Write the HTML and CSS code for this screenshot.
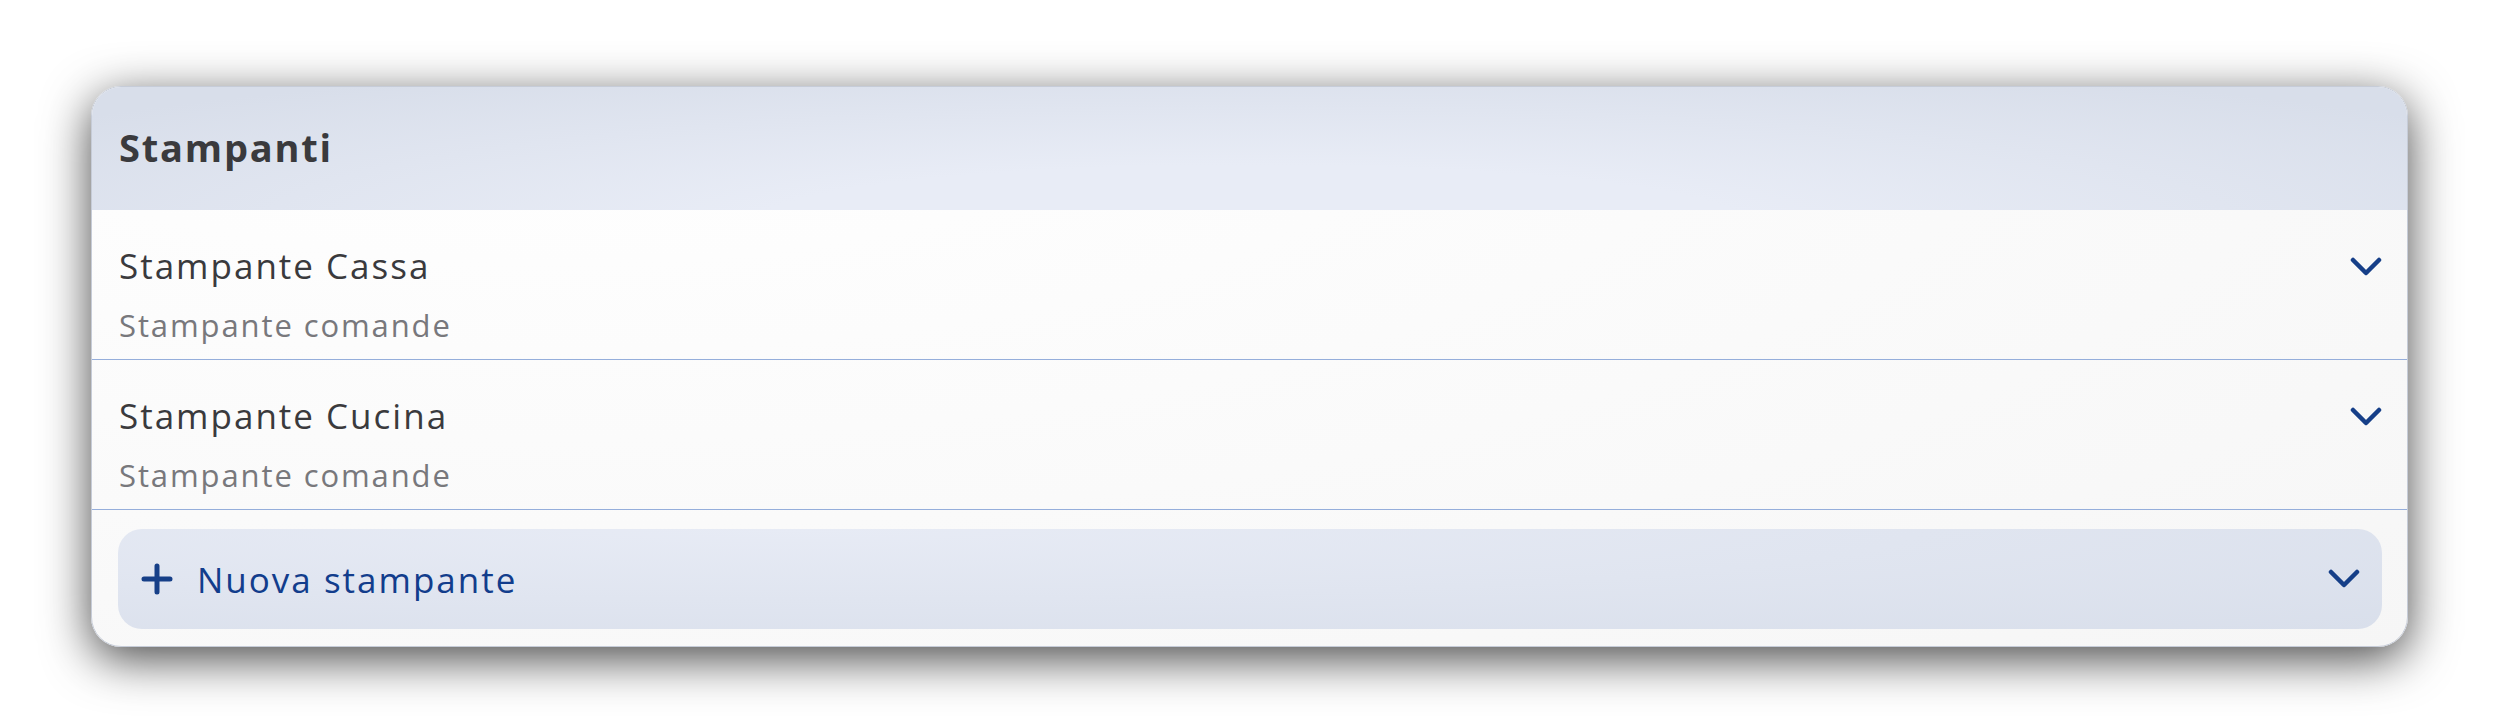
FILE: index.html
```html
<!DOCTYPE html>
<html lang="it">
<head>
  <meta charset="UTF-8" />
  <meta name="viewport" content="width=device-width, initial-scale=1.0"/>
  <title>Stampanti</title>
  <link rel="stylesheet" href="styles.css">
</head>
<body>

  <div class="card">
    <div class="card-header">Stampanti</div>

    <div class="printer">
      <div class="printer-text">
        <div class="printer-name">Stampante Cassa</div>
        <div class="printer-type">Stampante comande</div>
      </div>
      <svg class="chevron" viewBox="0 0 32 20"><polyline points="3,3 16,16 29,3"/></svg>
    </div>

    <div class="printer">
      <div class="printer-text">
        <div class="printer-name">Stampante Cucina</div>
        <div class="printer-type">Stampante comande</div>
      </div>
      <svg class="chevron" viewBox="0 0 32 20"><polyline points="3,3 16,16 29,3"/></svg>
    </div>

    <div class="add-area">
      <div class="add-button">
        <svg class="plus" viewBox="0 0 32 32"><path d="M16 3 V29 M3 16 H29"/></svg>
        <span class="add-label">Nuova stampante</span>
        <svg class="chevron" viewBox="0 0 32 20"><polyline points="3,3 16,16 29,3"/></svg>
      </div>
    </div>
  </div>

</body>
</html>
```

FILE: styles.css
```css
html {
  background: #fff;
}

body {
  margin: 0;
  padding: 86px 100px 0 91px;
  min-height: 726px;
  box-sizing: border-box;
  background: #fff;
  font-family: "Open Sans", Arial, sans-serif;
}

.card {
  border-radius: 30px;
  overflow: hidden;
  background: radial-gradient(ellipse at 20% 0%, #ffffff, #f6f6f6);
  border: 1px solid #c6ccd8;
  box-shadow: 0 12px 48px rgba(0, 0, 0, 0.72);
  height: 559px;
}

.card-header {
  height: 119px;
  display: flex;
  align-items: center;
  padding: 0 0 4px 27px;
  background: radial-gradient(ellipse at 50% 110%, #e8ecf6 30%, #d8deea 90%);
  color: #3a3a3d;
  font-size: 38px;
  font-weight: bold;
  letter-spacing: 1.8px;
}

.printer {
  height: 149px;
  display: flex;
  align-items: flex-start;
  justify-content: space-between;
  padding: 0 25px 0 27px;
  border-bottom: 1px solid #95aedb;
}

.printer-text {
  padding-top: 32px;
}

.printer-name {
  font-size: 35px;
  line-height: 48px;
  color: #3a3a3d;
  letter-spacing: 2px;
}

.printer-type {
  margin-top: 14px;
  font-size: 31px;
  line-height: 42px;
  color: #78787c;
  letter-spacing: 1.9px;
}

.chevron {
  width: 32px;
  height: 20px;
  fill: none;
  stroke: #163f88;
  stroke-width: 4.5;
  stroke-linecap: round;
  stroke-linejoin: round;
}

.printer .chevron {
  margin-top: 47px;
}

.add-area {
  padding: 19px 25px 0 26px;
}

.add-button {
  height: 100px;
  border-radius: 24px;
  display: flex;
  align-items: center;
  padding: 0 22px 0 23px;
  background: radial-gradient(ellipse at 30% 0%, #e7ebf5, #d9dfeb);
}

.plus {
  width: 32px;
  height: 32px;
  fill: none;
  stroke: #163f88;
  stroke-width: 5;
  stroke-linecap: round;
}

.add-label {
  margin-left: 24px;
  flex: 1;
  font-size: 35px;
  color: #123d8c;
  letter-spacing: 2px;
}
```
